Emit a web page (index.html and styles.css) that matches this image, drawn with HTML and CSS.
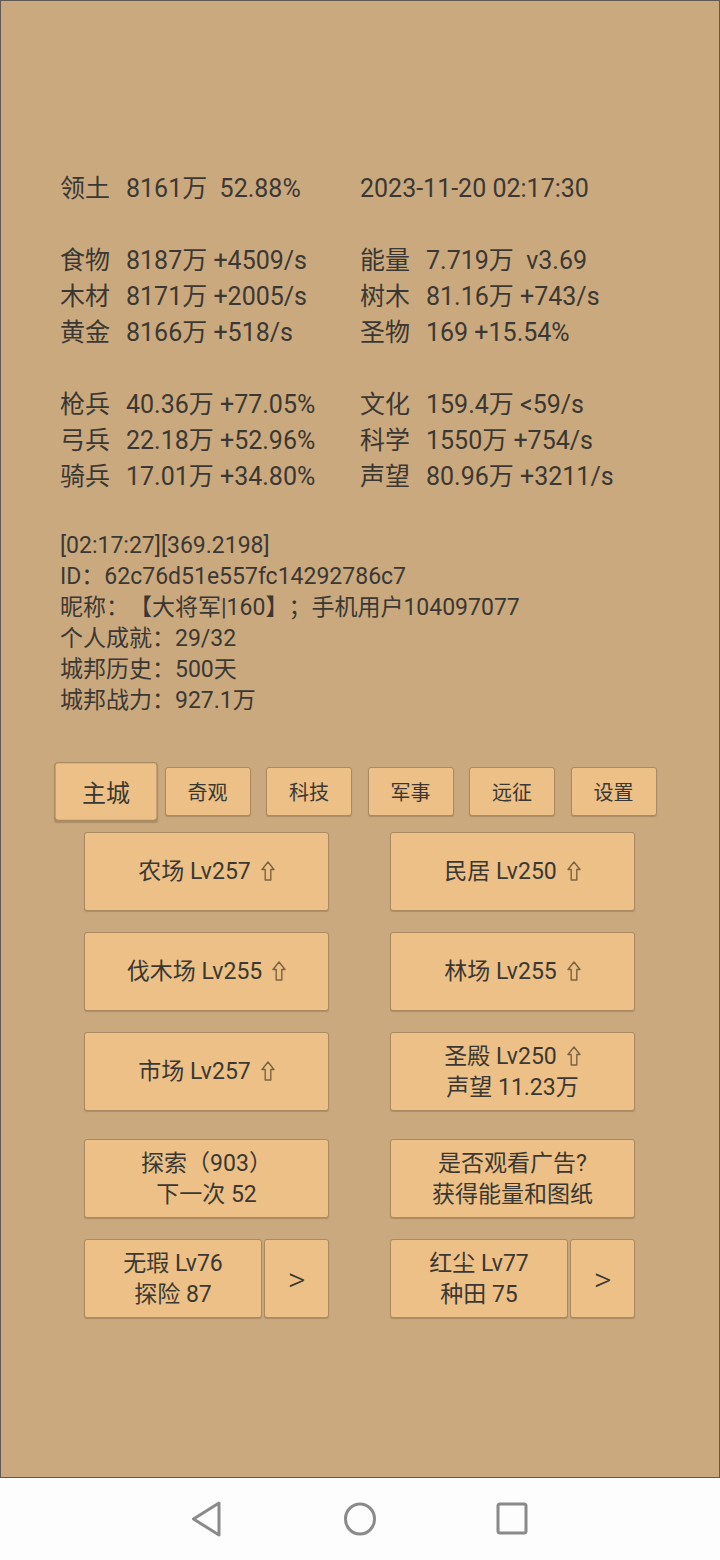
FILE: index.html
```html
<!DOCTYPE html>
<html lang="zh-CN">
<head>
  <meta charset="UTF-8">
  <title>城邦</title>
  <link rel="stylesheet" href="styles.css">
</head>
<body>
  <div class="screen">
    <section class="stats">
      <div class="group">
        <span><b class="k">领土</b>8161万  52.88%</span>
        <span>2023-11-20 02:17:30</span>
      </div>
      <div class="group">
        <span><b class="k">食物</b>8187万 +4509/s</span>
        <span><b class="k">能量</b>7.719万  v3.69</span>
        <span><b class="k">木材</b>8171万 +2005/s</span>
        <span><b class="k">树木</b>81.16万 +743/s</span>
        <span><b class="k">黄金</b>8166万 +518/s</span>
        <span><b class="k">圣物</b>169 +15.54%</span>
      </div>
      <div class="group">
        <span><b class="k">枪兵</b>40.36万 +77.05%</span>
        <span><b class="k">文化</b>159.4万 &lt;59/s</span>
        <span><b class="k">弓兵</b>22.18万 +52.96%</span>
        <span><b class="k">科学</b>1550万 +754/s</span>
        <span><b class="k">骑兵</b>17.01万 +34.80%</span>
        <span><b class="k">声望</b>80.96万 +3211/s</span>
      </div>
    </section>

    <section class="info">
      <div>[02:17:27][369.2198]</div>
      <div>ID：62c76d51e557fc14292786c7</div>
      <div>昵称：【大将军|160】；手机用户104097077</div>
      <div>个人成就：29/32</div>
      <div>城邦历史：500天</div>
      <div>城邦战力：927.1万</div>
    </section>

    <nav class="tabs">
      <button class="btn tab active">主城</button>
      <button class="btn tab">奇观</button>
      <button class="btn tab">科技</button>
      <button class="btn tab">军事</button>
      <button class="btn tab">远征</button>
      <button class="btn tab">设置</button>
    </nav>

    <section class="buildings">
      <div class="brow">
        <button class="btn big">农场 Lv257<svg class="up" viewBox="0 0 14 20"><path d="M7 1 L13 8.5 H9.8 V19 H4.2 V8.5 H1 Z"/></svg></button>
        <button class="btn big">民居 Lv250<svg class="up" viewBox="0 0 14 20"><path d="M7 1 L13 8.5 H9.8 V19 H4.2 V8.5 H1 Z"/></svg></button>
      </div>
      <div class="brow">
        <button class="btn big">伐木场 Lv255<svg class="up" viewBox="0 0 14 20"><path d="M7 1 L13 8.5 H9.8 V19 H4.2 V8.5 H1 Z"/></svg></button>
        <button class="btn big">林场 Lv255<svg class="up" viewBox="0 0 14 20"><path d="M7 1 L13 8.5 H9.8 V19 H4.2 V8.5 H1 Z"/></svg></button>
      </div>
      <div class="brow">
        <button class="btn big">市场 Lv257<svg class="up" viewBox="0 0 14 20"><path d="M7 1 L13 8.5 H9.8 V19 H4.2 V8.5 H1 Z"/></svg></button>
        <button class="btn big"><span>圣殿 Lv250<svg class="up" viewBox="0 0 14 20"><path d="M7 1 L13 8.5 H9.8 V19 H4.2 V8.5 H1 Z"/></svg><br>声望 11.23万</span></button>
      </div>
      <div class="brow wide-gap">
        <button class="btn big"><span>探索（903）<br>下一次 52</span></button>
        <button class="btn big"><span>是否观看广告?<br>获得能量和图纸</span></button>
      </div>
      <div class="brow">
        <div class="split">
          <button class="btn big"><span>无瑕 Lv76<br>探险 87</span></button>
          <button class="btn next">&gt;</button>
        </div>
        <div class="split">
          <button class="btn big"><span>红尘 Lv77<br>种田 75</span></button>
          <button class="btn next">&gt;</button>
        </div>
      </div>
    </section>
  </div>

  <div class="navbar">
    <svg class="nav-icon" viewBox="0 0 32 36"><path d="M27 2 L1.5 18 L27 34 Z"/></svg>
    <svg class="nav-icon" viewBox="0 0 32 36"><ellipse cx="16" cy="18" rx="14.5" ry="15"/></svg>
    <svg class="nav-icon" viewBox="0 0 32 36"><rect x="2" y="3" width="28" height="29" rx="2"/></svg>
  </div>
</body>
</html>
```

FILE: styles.css
```css
* {
  box-sizing: border-box;
}

body {
  margin: 0;
  font-family: Roboto, "Noto Sans CJK SC", sans-serif;
  color: #3b3833;
  background: #fdfdfd;
  text-spacing-trim: space-all;
}

.screen {
  height: 1478px;
  border: 1px solid #5f5a54;
  background: #caa97f;
}

.stats {
  padding: 170px 0 0 59px;
  font-size: 25px;
  line-height: 36px;
}

.group {
  display: grid;
  grid-template-columns: 300px auto;
  white-space: pre;
}

.group + .group {
  margin-top: 36px;
}

.k {
  display: inline-block;
  width: 66px;
  font-weight: normal;
}

.info {
  margin-top: 35px;
  padding-left: 59px;
  font-size: 23px;
  line-height: 31px;
}

.btn {
  font-family: inherit;
  color: #3b3833;
  background: #ecc086;
  border: 1px solid #a98a63;
  border-radius: 3px;
  box-shadow: 0 1px 1px rgba(80, 55, 25, 0.25);
  padding: 0;
  cursor: pointer;
}

.tabs {
  display: flex;
  gap: 15.5px;
  margin-top: 51px;
  padding-left: 62px;
}

.tab {
  width: 86px;
  height: 49px;
  font-size: 20px;
}

.tab.active {
  transform: scale(1.2);
}

.buildings {
  display: flex;
  flex-direction: column;
  gap: 21px;
  margin-top: 16px;
  padding-left: 83px;
}

.brow {
  display: grid;
  grid-template-columns: 245px 245px;
  column-gap: 61px;
  height: 79px;
}

.brow.wide-gap {
  margin-top: 7px;
}

.big {
  font-size: 23px;
  line-height: 31px;
}

.up {
  width: 14px;
  height: 20px;
  margin-left: 10px;
  vertical-align: -2px;
  fill: none;
  stroke: #7d6241;
  stroke-width: 1.4;
  stroke-linejoin: round;
}

.split {
  display: flex;
  gap: 2px;
}

.split .big {
  flex: 1;
}

.next {
  width: 65px;
  font-size: 34px;
  font-weight: 300;
}

.navbar {
  height: 82px;
  display: flex;
  justify-content: center;
  align-items: center;
  gap: 120px;
}

.nav-icon {
  width: 32px;
  height: 36px;
  fill: none;
  stroke: #8a8a8a;
  stroke-width: 3;
  stroke-linejoin: round;
}
```
